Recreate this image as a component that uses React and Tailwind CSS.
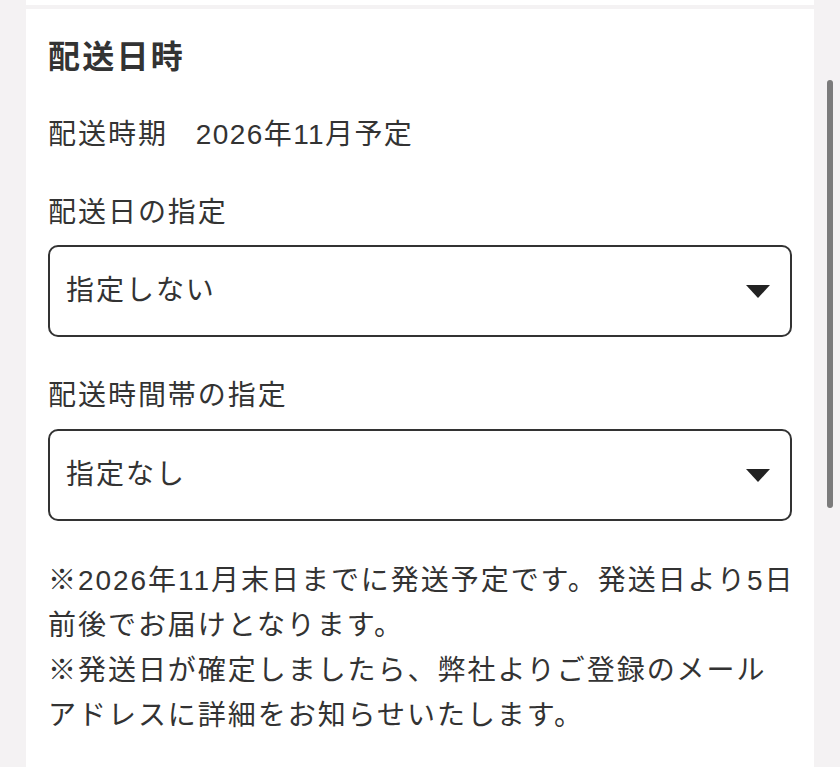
import React from "react";

function Caret() {
  return (
    <svg width="24" height="13" viewBox="0 0 24 13" className="shrink-0">
      <polygon points="0,0 24,0 12,13" fill="#222" />
    </svg>
  );
}

function Select({ value }) {
  return (
    <div className="h-[92px] border-2 border-[#333] rounded-[10px] flex items-center justify-between pl-[16px] pr-[20px] bg-white">
      <span className="text-[28px] leading-[40px] tracking-[0.07em] text-[#333]">{value}</span>
      <Caret />
    </div>
  );
}

export default function App() {
  return (
    <div
      className="relative h-[767px] w-[840px] overflow-hidden bg-[#f4f2f3] flex flex-col"
      style={{ fontFamily: '"Liberation Sans", "Noto Sans CJK JP", sans-serif' }}
    >
      <div className="h-[5px] mx-[26px] bg-white shrink-0" />
      <div className="mt-[4px] mx-[26px] bg-white flex-1 pt-[28px] px-[22px] text-[#333]">
        <h2 className="text-[32px] leading-[40px] font-bold tracking-[0.07em]">配送日時</h2>
        <p className="mt-[38px] text-[28px] leading-[40px] tracking-[0.07em]">
          <span>配送時期</span>
          <span className="ml-[28px] tracking-[0.05em]">2026年11月予定</span>
        </p>
        <p className="mt-[38px] text-[28px] leading-[40px] tracking-[0.07em]">配送日の指定</p>
        <div className="mt-[12px]">
          <Select value="指定しない" />
        </div>
        <p className="mt-[39px] text-[28px] leading-[40px] tracking-[0.07em]">配送時間帯の指定</p>
        <div className="mt-[13px]">
          <Select value="指定なし" />
        </div>
        <p className="mt-[37px] text-[28px] leading-[45px] tracking-[0.07em] whitespace-nowrap">
          ※2026年11月末日までに発送予定です。発送日より5日
          <br />
          前後でお届けとなります。
          <br />
          ※発送日が確定しましたら、弊社よりご登録のメール
          <br />
          アドレスに詳細をお知らせいたします。
        </p>
      </div>
      <div className="absolute left-[827px] top-[80px] w-[6px] h-[428px] rounded-full bg-[#7b7b7b]" />
    </div>
  );
}
